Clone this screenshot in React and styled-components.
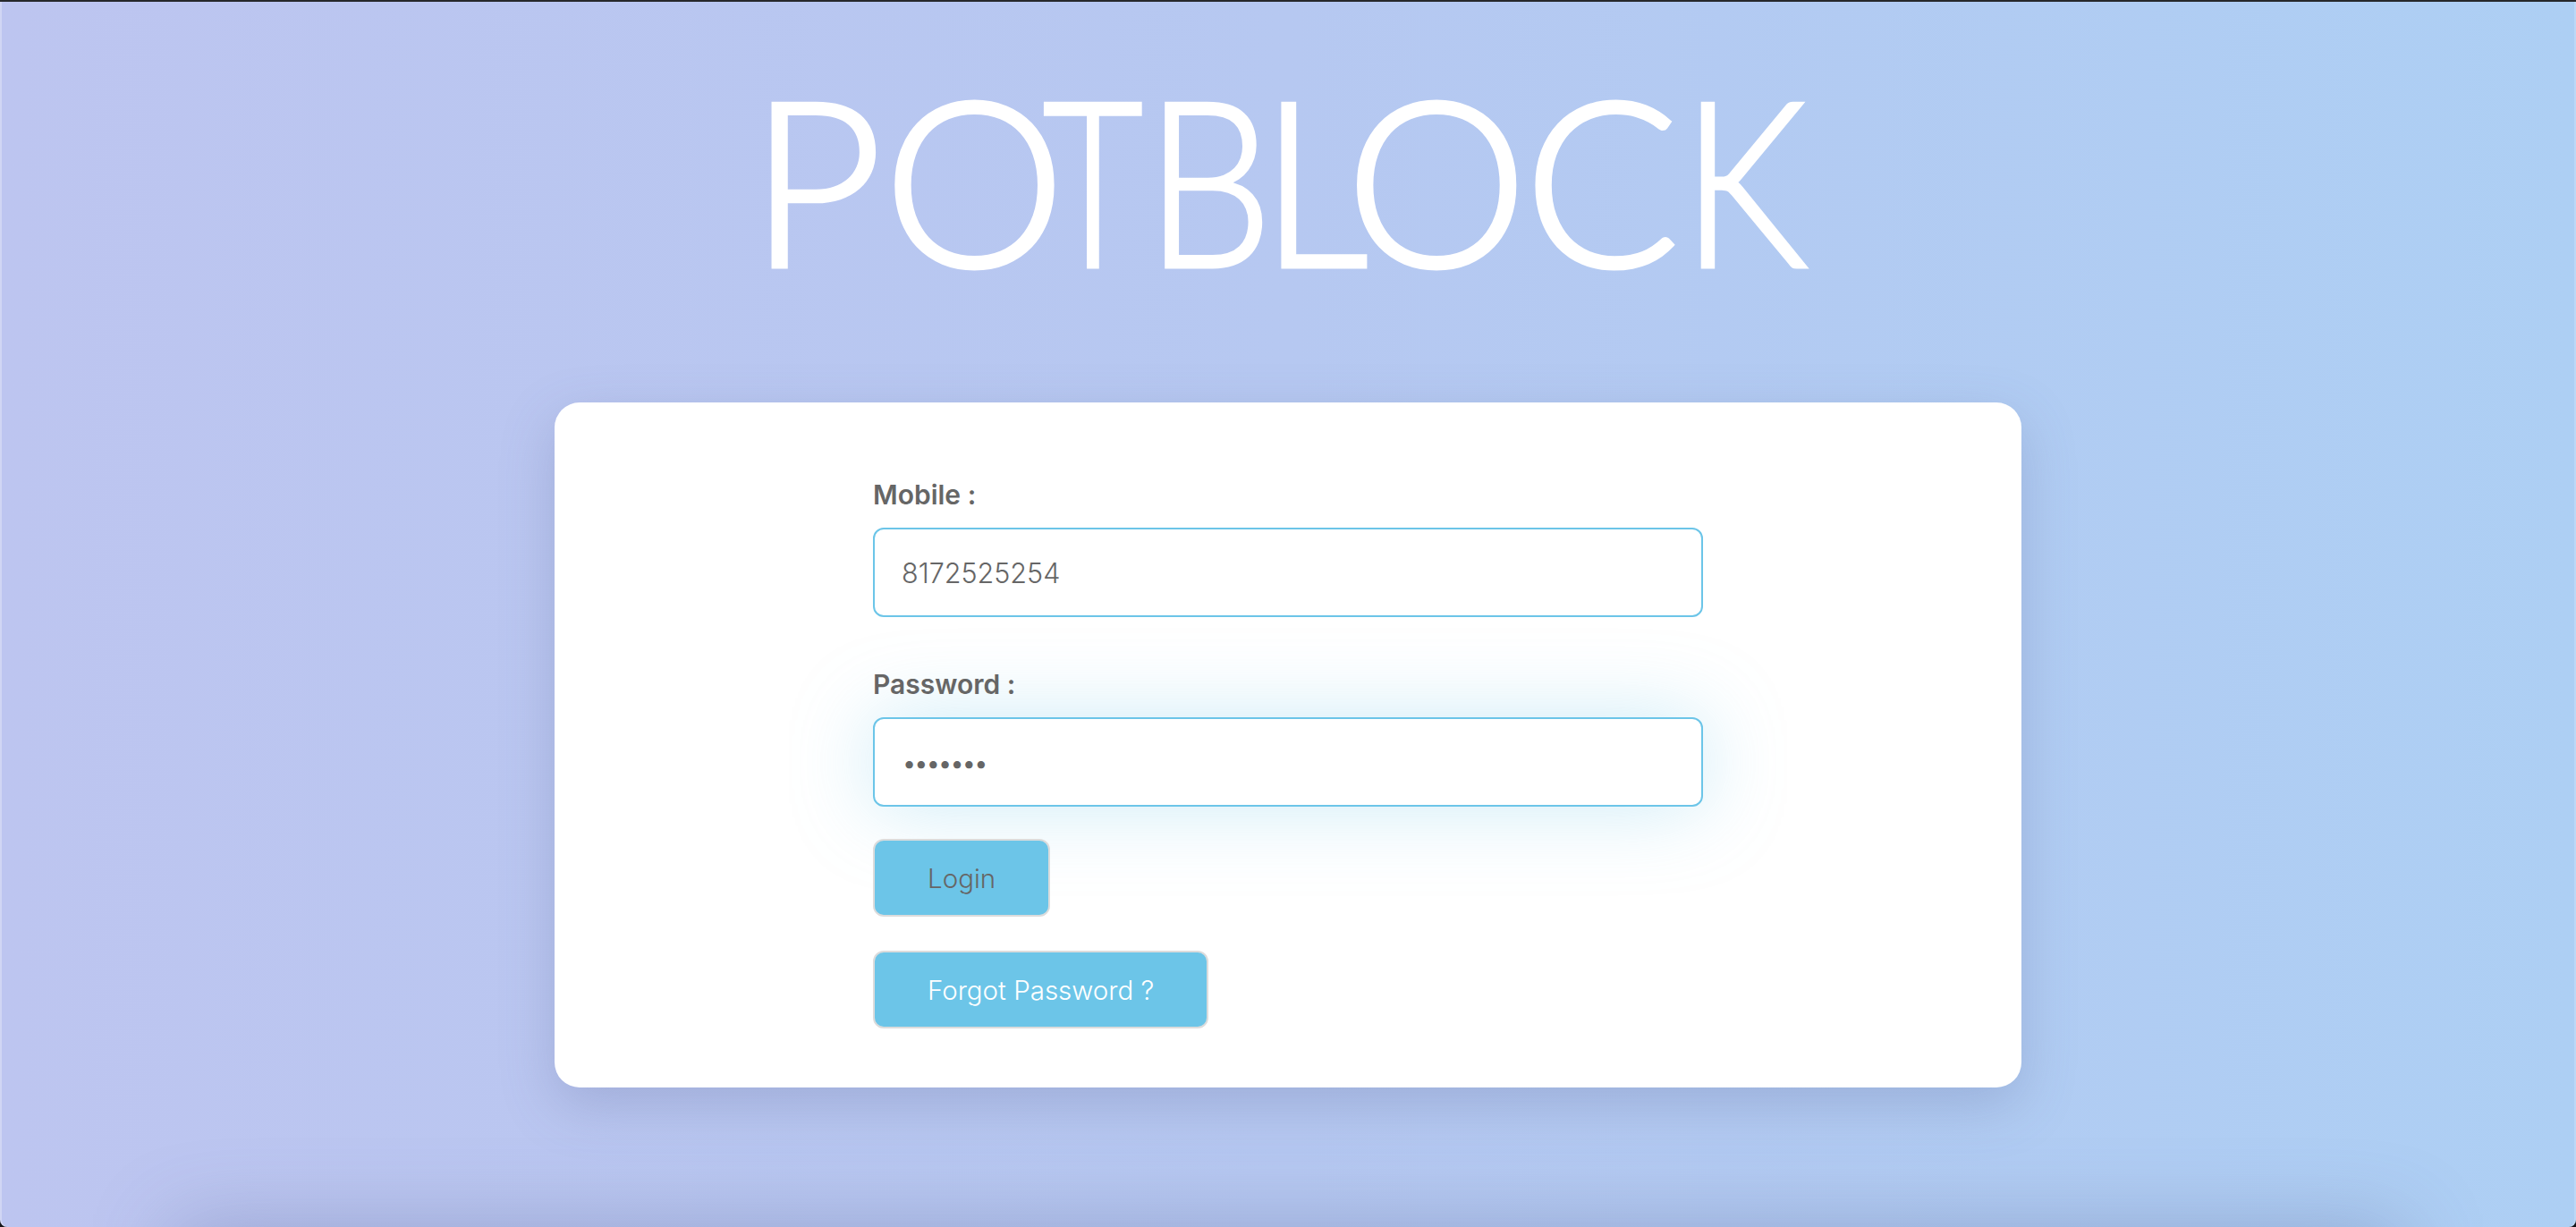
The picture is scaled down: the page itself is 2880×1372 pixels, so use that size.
import React from "react";
import styled, { createGlobalStyle } from "styled-components";

const GlobalStyle = createGlobalStyle`
  html, body {
    margin: 0;
    padding: 0;
    background: #16161a;
  }
  * {
    box-sizing: border-box;
  }
`;

const Page = styled.div`
  height: 1372px;
  overflow: hidden;
  display: flex;
  flex-direction: column;
  align-items: center;
  border-top: 2px solid #26282b;
  border-radius: 0 0 8px 8px;
  background: linear-gradient(to right, #bdc5f0, #b6c8f1 50%, #adcff4);
  box-shadow: inset 2px 0 0 rgba(255, 255, 255, 0.3), inset -2px 0 0 rgba(255, 255, 255, 0.2);
  font-family: Inter, "Liberation Sans", sans-serif;
  color: #666;
`;

const Logo = styled.h1`
  flex: none;
  margin: 0;
  height: 448px;
  padding-top: 65px;
  font-family: Lato, "Noto Sans", sans-serif;
  font-size: 257px;
  font-weight: 300;
  line-height: 264px;
  color: #fff;
  -webkit-text-stroke: 5px #fff;
`;

const Letter = styled.span`
  display: inline-block;
  letter-spacing: ${(props) => props.$kern}px;
  transform: scaleX(${(props) => props.$scale});
  transform-origin: left center;
`;

const Card = styled.div`
  flex: none;
  width: 1640px;
  height: 766px;
  padding: 85px 356px 0;
  background: #fff;
  border-radius: 28px;
  box-shadow: 0 20px 60px rgba(90, 100, 150, 0.26);
`;

const Form = styled.form`
  display: flex;
  flex-direction: column;
  align-items: flex-start;
`;

const Field = styled.div`
  width: 100%;
  margin-bottom: ${(props) => props.$gap}px;
`;

const Label = styled.label`
  display: block;
  height: 36px;
  margin-bottom: 19px;
  font-size: 30px;
  font-weight: 600;
  line-height: 36px;
`;

const Input = styled.input`
  display: block;
  width: 100%;
  height: 100px;
  padding: 0 30px;
  border: 2px solid #6cc5e8;
  border-radius: 12px;
  outline: none;
  background: #fff;
  font-family: inherit;
  font-size: 30.5px;
  font-weight: 300;
  color: #666;
  letter-spacing: ${(props) => (props.$focused ? "-3.8px" : "0")};
  box-shadow: ${(props) => (props.$focused ? "0 0 90px rgba(108, 197, 232, 0.34)" : "none")};
`;

const Button = styled.button`
  display: block;
  height: 87px;
  margin-bottom: 38px;
  padding: 0 59px;
  border: 2px solid #dcdcdc;
  border-radius: 12px;
  background: #6cc5e8;
  font-family: inherit;
  font-size: 29.5px;
  font-weight: 300;
  color: ${(props) => (props.$light ? "#fff" : "#666")};
`;

const Footer = styled.div`
  flex: none;
  width: 2490px;
  height: 200px;
  margin-top: 156px;
  box-shadow: 0 0 90px rgba(90, 100, 150, 0.35);
`;

// letter, tracking to the next letter, horizontal squeeze
const logoLetters = [
  ["P", 1, 1],
  ["O", -25, 1],
  ["T", -34, 0.75],
  ["B", -33, 0.87],
  ["L", -36, 0.92],
  ["O", -4, 1],
  ["C", 3, 1],
  ["K", -2, 0.85],
];

const App = () => {
  return (
    <>
      <GlobalStyle />
      <Page>
        <Logo>
          {logoLetters.map(([letter, kern, scale], i) => (
            <Letter key={i} $kern={kern} $scale={scale}>{letter}</Letter>
          ))}
        </Logo>
        <Card>
          <Form onSubmit={(e) => e.preventDefault()}>
            <Field $gap={57}>
              <Label>Mobile :</Label>
              <Input type="text" defaultValue="8172525254" />
            </Field>
            <Field $gap={36}>
              <Label>Password :</Label>
              <Input type="password" defaultValue="1234567" $focused />
            </Field>
            <Button type="button">Login</Button>
            <Button type="button" $light>Forgot Password ?</Button>
          </Form>
        </Card>
        <Footer />
      </Page>
    </>
  );
};

export default App;
